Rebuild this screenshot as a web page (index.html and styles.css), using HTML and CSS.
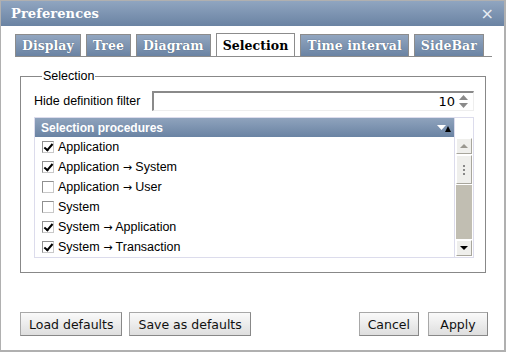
FILE: index.html
```html
<!DOCTYPE html>
<html>
<head>
<meta charset="utf-8">
<link rel="stylesheet" href="styles.css">
</head>
<body>
<div class="window">
  <div class="titlebar">
    <span class="title">Preferences</span>
    <span class="close">×</span>
  </div>
  <div class="tabs">
    <div class="tab">Display</div>
    <div class="tab">Tree</div>
    <div class="tab">Diagram</div>
    <div class="tab active">Selection</div>
    <div class="tab">Time interval</div>
    <div class="tab">SideBar</div>
  </div>
  <div class="content">
    <fieldset class="group">
      <legend>Selection</legend>
      <div class="field">
        <label>Hide definition filter</label>
        <div class="spin">
          <span class="val">10</span>
          <svg class="spin-arrows" width="11" height="13" viewBox="0 0 11 13"><path d="M5.5 0 L10 5 L1 5 Z" fill="#8a8a8a"/><path d="M1 8 L10 8 L5.5 13 Z" fill="#8a8a8a"/></svg>
        </div>
      </div>
      <div class="grid">
        <div class="grid-main">
          <div class="grid-head">
            <span>Selection procedures</span>
            <svg class="sort" width="14" height="9" viewBox="0 0 14 9"><path d="M0 1 L9 1 L4.5 6 Z" fill="#fff"/><path d="M8 8 L14 8 L11 2 Z" fill="#000"/></svg>
          </div>
          <div class="rows">
            <div class="row"><span class="cb on"></span>Application</div>
            <div class="row"><span class="cb on"></span>Application <span class="arr">→</span> System</div>
            <div class="row"><span class="cb"></span>Application <span class="arr">→</span> User</div>
            <div class="row"><span class="cb"></span>System</div>
            <div class="row"><span class="cb on"></span>System <span class="arr">→</span> Application</div>
            <div class="row"><span class="cb on"></span>System <span class="arr">→</span> Transaction</div>
          </div>
        </div>
        <div class="scroll">
          <div class="sb-corner"></div>
          <div class="sb-btn"><svg width="8" height="4" viewBox="0 0 8 4"><path d="M0 4 L8 4 L4 0 Z" fill="#9a9890"/></svg></div>
          <div class="sb-thumb"><span class="dots"></span></div>
          <div class="sb-track"></div>
          <div class="sb-btn"><svg width="8" height="4" viewBox="0 0 8 4"><path d="M0 0 L8 0 L4 4 Z" fill="#000"/></svg></div>
        </div>
      </div>
    </fieldset>
  </div>
  <div class="footer">
    <div class="btns">
      <button class="btn">Load defaults</button>
      <button class="btn">Save as defaults</button>
    </div>
    <div class="btns right">
      <button class="btn">Cancel</button>
      <button class="btn">Apply</button>
    </div>
  </div>
</div>
</body>
</html>
```
FILE: styles.css
```css
html, body { margin: 0; padding: 0; background: #fff; }
body { width: 506px; height: 352px; overflow: hidden; }
.window {
  box-sizing: border-box;
  width: 506px; height: 352px;
  border: 1px solid #b0b0b0;
  border-right-width: 2px;
  border-bottom-width: 2px;
  display: flex; flex-direction: column;
  background: #fff;
}
.titlebar {
  height: 25px;
  background: linear-gradient(#90a5c0, #6a83a3);
  display: flex; align-items: center; justify-content: space-between;
  padding: 0 10px 0 10px;
  color: #fff;
}
.title { font: bold 13px "DejaVu Serif", serif; letter-spacing: 0.1px; }
.close { font: 16px "DejaVu Sans", sans-serif; color: #e8edf3; line-height: 1; }
.tabs {
  display: flex; gap: 5px;
  margin: 8px 0 0 14px; width: 477px;
  border-bottom: 1px solid #8c8c8c;
  height: 22px;
}
.tab {
  box-sizing: border-box;
  height: 22px;
  padding: 0 6px;
  border: 1px solid #8c8c8c; border-bottom: none;
  background: linear-gradient(#92a6c0, #6a83a3);
  color: #fff;
  font: bold 12.5px "DejaVu Serif", serif;
  letter-spacing: 0.05px;
  line-height: 21px;
  text-shadow: 0 0 1px #3c4f68;
}
.tab.active {
  background: #fff; color: #000; text-shadow: none;
  height: 23px; margin-top: -1px; line-height: 23px;
}
.content { padding: 12px 0 0 19px; }
.group {
  box-sizing: border-box;
  width: 466px; height: 204px;
  margin: 0; padding: 8px 11px 0 13px;
  border: 1px solid #888;
  border-radius: 0;
  font: 12px "Liberation Sans", Arial, sans-serif;
}
.group legend { padding: 0 1px; margin-left: 8px; font-size: 12.5px; }
.field { display: flex; align-items: center; height: 20px; }
.field label { font-size: 12.5px; width: 118px; }
.spin {
  box-sizing: border-box;
  flex: 1; height: 20px;
  border-top: 2px solid #8a8a8a; border-left: 2px solid #8a8a8a;
  border-right: 1px solid #eee; border-bottom: 1px solid #eee;
  display: flex; align-items: center; justify-content: flex-end;
  padding-right: 4px; gap: 3px;
}
.val { font: 13px "DejaVu Sans", sans-serif; }
.grid {
  box-sizing: border-box;
  margin-top: 6px;
  height: 141px;
  border: 1px solid #dcdcec;
  display: flex;
}
.grid-main { flex: 1; display: flex; flex-direction: column; }
.grid-head {
  height: 19px;
  background: linear-gradient(#8fa3bd, #6a83a3);
  color: #fff; font-weight: bold; font-size: 12px;
  display: flex; align-items: center; justify-content: space-between;
  padding: 0 3px 0 6px;
}
.sort { margin-top: 2px; }
.row {
  height: 20px; display: flex; align-items: center;
  font-size: 12.5px;
  padding-left: 7px;
  white-space: pre;
}
.arr { font: 11px "DejaVu Sans", sans-serif; }
.cb {
  box-sizing: border-box;
  width: 12px; height: 12px;
  border: 1px solid #c8c8c8; border-top-color: #909090; border-left-color: #909090;
  margin-right: 4px; background: #fff;
  position: relative;
}
.cb.on::after {
  content: "";
  position: absolute; left: 3px; top: 0px;
  width: 3px; height: 7px;
  border: solid #000; border-width: 0 2px 2px 0;
  transform: rotate(40deg);
}
.scroll {
  width: 18px; display: flex; flex-direction: column;
  border-left: 1px solid #dcdcec;
}
.sb-corner { height: 19px; background: #fff; }
.sb-btn {
  box-sizing: border-box; height: 16px; margin: 1px;
  background: #efefec; border: 1px solid #fff; border-right-color: #a8a69c; border-bottom-color: #a8a69c;
  display: flex; align-items: center; justify-content: center;
}
.sb-thumb {
  box-sizing: border-box; height: 29px; margin: 0 1px 1px;
  background: #efefec; border: 1px solid #fff; border-right-color: #a8a69c; border-bottom-color: #a8a69c;
  display: flex; align-items: center; justify-content: center;
}
.dots {
  width: 2px; height: 2px; background: #888;
  box-shadow: 0 4px 0 #888, 0 8px 0 #888;
  margin-top: -8px;
}
.sb-track { flex: 1; background: #c1beb2; margin: 0 1px; }
.footer {
  margin-top: auto; margin-bottom: 14px;
  display: flex; justify-content: space-between;
  padding: 0 16px 0 19px;
}
.btns { display: flex; gap: 7px; }
.btns.right { gap: 9px; }
.btn {
  height: 24px; padding: 0 8px; min-width: 60px;
  font: 12.5px "DejaVu Sans", sans-serif; color: #111;
  background: linear-gradient(#fafafa, #dedede);
  border: 1px solid #a8a8a8; border-right-color: #888; border-bottom-color: #888;
  border-radius: 0;
}
```
